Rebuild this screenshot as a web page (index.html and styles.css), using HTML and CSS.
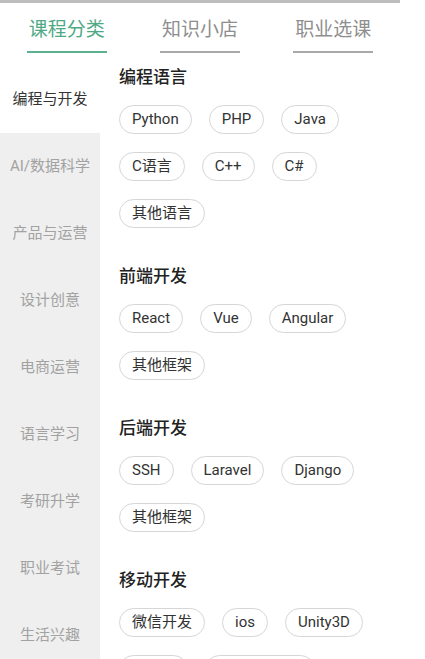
FILE: index.html
```html
<!DOCTYPE html>
<html lang="zh-CN">
<head>
  <meta charset="UTF-8" />
  <title>课程分类</title>
  <meta name="viewport" content="width=device-width, initial-scale=1" />
  <link rel="stylesheet" href="styles.css">
</head>
<body>

<div class="top-bar"></div>

<div class="tabs">
  <div class="tab active"><span>课程分类</span></div>
  <div class="tab"><span>知识小店</span></div>
  <div class="tab"><span>职业选课</span></div>
</div>

<div class="main">
  <ul class="side-menu">
    <li class="active">编程与开发</li>
    <li>AI/数据科学</li>
    <li>产品与运营</li>
    <li>设计创意</li>
    <li>电商运营</li>
    <li>语言学习</li>
    <li>考研升学</li>
    <li>职业考试</li>
    <li>生活兴趣</li>
  </ul>

  <div class="content">
    <div class="section">
      <h3>编程语言</h3>
      <div class="chips">
        <span class="chip">Python</span>
        <span class="chip">PHP</span>
        <span class="chip">Java</span>
        <span class="chip">C语言</span>
        <span class="chip">C++</span>
        <span class="chip">C#</span>
        <span class="chip">其他语言</span>
      </div>
    </div>

    <div class="section">
      <h3>前端开发</h3>
      <div class="chips">
        <span class="chip">React</span>
        <span class="chip">Vue</span>
        <span class="chip">Angular</span>
        <span class="chip">其他框架</span>
      </div>
    </div>

    <div class="section">
      <h3>后端开发</h3>
      <div class="chips">
        <span class="chip">SSH</span>
        <span class="chip">Laravel</span>
        <span class="chip">Django</span>
        <span class="chip">其他框架</span>
      </div>
    </div>

    <div class="section">
      <h3>移动开发</h3>
      <div class="chips">
        <span class="chip">微信开发</span>
        <span class="chip">ios</span>
        <span class="chip">Unity3D</span>
        <span class="chip">Flutter</span>
        <span class="chip">React Native</span>
      </div>
    </div>
  </div>
</div>

</body>
</html>
```

FILE: styles.css
```css
body {
  margin: 0;
  font-family: Roboto, 'Noto Sans CJK SC', sans-serif;
  background: white;
  color: #333;
  height: 659px;
  overflow: hidden;
}
.top-bar {
  width: 400px;
  height: 3px;
  background: #bdbdbd;
}
.tabs {
  display: flex;
  width: 400px;
  height: 63px;
}
.tab {
  flex: 1;
  display: flex;
  justify-content: center;
}
.tab span {
  display: block;
  margin-top: 15px;
  padding: 0 2px;
  height: 33px;
  font-size: 19px;
  line-height: 24px;
  color: #8e8e8e;
  border-bottom: 2px solid #a9a9a9;
}
.tab.active span {
  color: #4fa985;
  border-bottom-color: #5ab28e;
}
.main {
  display: flex;
  align-items: flex-start;
}
.side-menu {
  list-style: none;
  margin: 0;
  padding: 0;
  width: 100px;
  flex-shrink: 0;
  background: #efefef;
  min-height: 600px;
}
.side-menu li {
  height: 67px;
  line-height: 67px;
  text-align: center;
  font-size: 15px;
  color: #a2a2a2;
  white-space: nowrap;
}
.side-menu li.active {
  background: white;
  color: #333;
}
.content {
  flex: 1;
  padding-left: 19px;
}
.section {
  margin-bottom: 37px;
}
h3 {
  margin: 0 0 17px;
  font-size: 17px;
  line-height: 22px;
  font-weight: 500;
  color: #222;
}
.chips {
  display: flex;
  flex-wrap: wrap;
  gap: 18px 17px;
  width: 270px;
}
.chip {
  display: inline-block;
  height: 27px;
  line-height: 27px;
  padding: 0 12px;
  font-size: 15px;
  color: #333;
  border: 1px solid #d6d6d6;
  border-radius: 15px;
  white-space: nowrap;
}
```
